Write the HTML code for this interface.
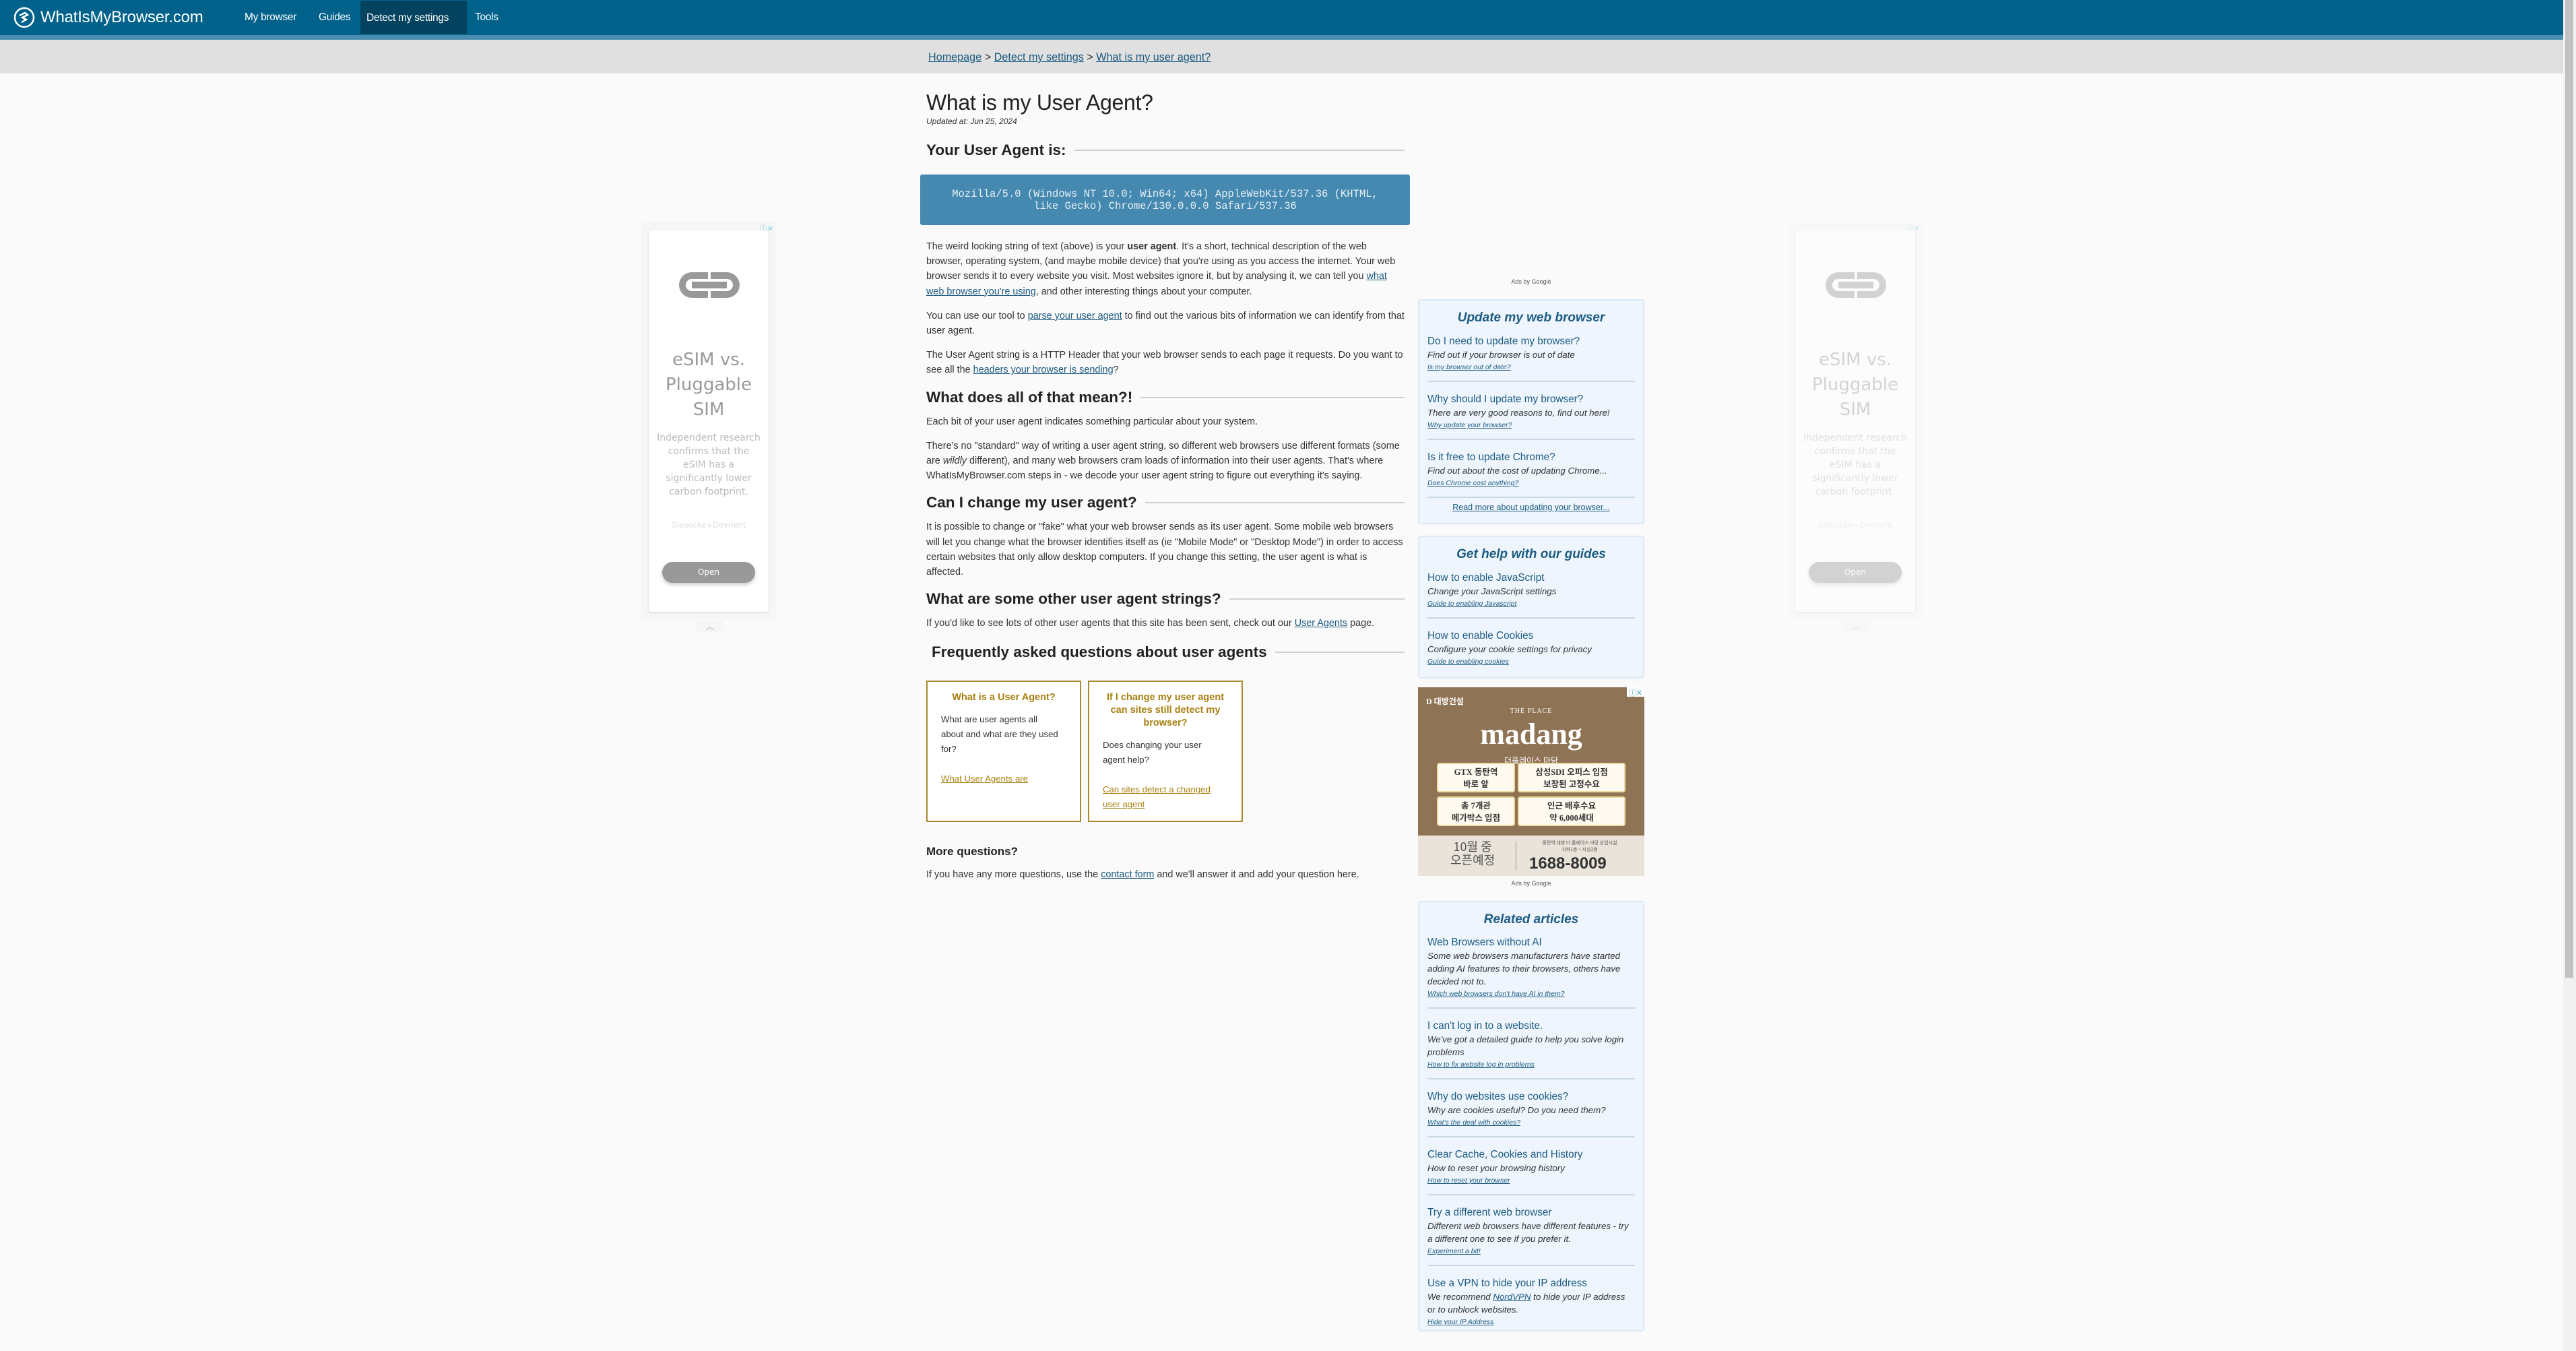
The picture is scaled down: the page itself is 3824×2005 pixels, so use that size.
<!DOCTYPE html>
<html><head><meta charset="utf-8">
<style>
*{box-sizing:border-box;margin:0;padding:0}
html,body{width:3824px;height:2005px;overflow:hidden;background:#fafafa;font-family:"Liberation Sans","Noto Sans CJK KR",sans-serif;color:#333}
a{color:#1b5a80;text-decoration:underline}
.abs{position:absolute}
#nav{left:0;top:0;width:3805px;height:52px;background:#00628b}
#stripe{left:0;top:52px;width:3805px;height:7px;background:#4a8db0}
#crumb{left:0;top:59px;width:3805px;height:50px;background:#e0e0e0}
.navi{position:absolute;top:0;height:50px;line-height:52px;color:#fff;font-size:15.5px;letter-spacing:-0.3px}
#main{left:1375px;top:132px;width:710px;font-size:14.4px;line-height:22.2px}
#main p{margin:0 0 14px 0}
h1{font-size:32px;font-weight:normal;color:#222;line-height:40px;letter-spacing:-0.3px}
.upd{font-size:12px;font-style:italic;line-height:16px;color:#333}
h2{display:flex;align-items:center;font-size:22.5px;font-weight:bold;color:#222;line-height:30px;margin:13px 0 10px}
h2:after{content:"";flex:1;height:2px;background:#d0d0d0;margin-left:12px}
#ua{left:1366px;top:259px;width:727px;height:75px;background:#4589b0;border-radius:3px;color:#e8f0f6;font-family:"Liberation Mono",monospace;font-size:15.5px;line-height:18px;text-align:center;padding-top:20px}
.card{position:absolute;top:1010px;width:230px;height:210px;border:2px solid #a88a30;background:#fff;padding:8px 30px 8px 20px;font-size:13.2px;line-height:22px}
.card h4{color:#a87f10;font-size:14.5px;text-align:center;line-height:19px;margin:6px -10px 12px 0}
.card a{color:#a87f10}
.box{position:absolute;left:2105px;width:336px;background:#eef5fc;border:2px solid #dde9f4;border-radius:4px;padding:0 12px}
.box h3{text-align:center;font-style:italic;font-weight:bold;color:#1c5b82;font-size:19px;line-height:24px;margin:14px 0 9px}
.it{border-bottom:2px solid #c8d8e4;padding:4px 0 10px;margin-bottom:12px}
.it .t{color:#1c5b82;font-size:15.3px;line-height:20px}
.it .d{font-style:italic;font-size:13.3px;line-height:19px;color:#333}
.it .l{font-style:italic;font-size:10.5px;line-height:19px}
.it:last-child{border-bottom:none}
.adw{position:absolute;top:329px;width:200px;height:590px;background:#f6f6f6}
.adc{position:absolute;left:11px;top:13px;width:178px;height:566px;background:#fff;border-radius:4px;box-shadow:0 1px 3px rgba(0,0,0,.15);text-align:center;font-family:"DejaVu Sans",sans-serif}
.adc .ti{position:absolute;top:174px;width:100%;font-size:26px;line-height:37px;color:#9a9a9a}
.adc .bd{position:absolute;top:298px;left:10px;width:158px;font-size:14px;line-height:20px;color:#bbb}
.adc .br{position:absolute;top:430px;width:100%;font-size:11.5px;color:#ddd}
.adc .op{position:absolute;top:492px;left:20px;width:138px;height:31px;border-radius:16px;background:#999;color:#fff;font-size:12px;line-height:31px;box-shadow:0 3px 6px rgba(0,0,0,.2)}
.tab{position:absolute;left:82px;top:592px;width:40px;height:18px;background:#f6f6f6;border-radius:0 0 6px 6px;color:#aaa;font-size:12px;text-align:center;line-height:18px}
.kbox{position:absolute;width:118px;height:44px;background:#fffaf0;border:2px solid #f1d9a0;border-radius:4px;text-align:center;font-size:12.5px;line-height:18px;font-weight:bold;color:#333;padding-top:3px}
</style></head><body>
<div class="abs" id="nav">
  <svg class="abs" style="left:20px;top:10px" width="32" height="32" viewBox="0 0 32 32"><circle cx="16" cy="16" r="14" fill="none" stroke="#fff" stroke-width="2.5"/><path d="M9 13l8-4 4 3-8 4 6 3-7 4" fill="none" stroke="#fff" stroke-width="2.5"/></svg>
  <div class="navi" style="left:60px;font-size:24px;letter-spacing:-0.2px">WhatIsMyBrowser.com</div>
  <div class="navi" style="left:363px">My browser</div>
  <div class="navi" style="left:473px">Guides</div>
  <div class="navi" style="left:535px;width:158px;background:#034360;top:1px;height:49px;padding-left:9px">Detect my settings</div>
  <div class="navi" style="left:705px">Tools</div>
</div>
<div class="abs" id="stripe"></div>
<div class="abs" id="crumb"><div class="abs" style="left:1378px;top:17px;font-size:16.2px;color:#333"><a href="#">Homepage</a> &gt; <a href="#">Detect my settings</a> &gt; <a href="#">What is my user agent?</a></div></div>
<div class="abs" style="left:3805px;top:0;width:19px;height:2005px;background:#f1f1f1"></div>
<div class="abs" style="left:3808px;top:0;width:12px;height:1451px;background:#c1c1c1"></div>

<div class="abs" id="main">
<h1>What is my User Agent?</h1>
<div class="upd">Updated at: Jun 25, 2024</div>
<h2 style="margin-top:20px">Your User Agent is:</h2>
<div style="height:107px"></div>
<p>The weird looking string of text (above) is your <b>user agent</b>. It's a short, technical description of the web browser, operating system, (and maybe mobile device) that you're using as you access the internet. Your web browser sends it to every website you visit. Most websites ignore it, but by analysing it, we can tell you <a href="#">what web browser you're using</a>, and other interesting things about your computer.</p>
<p>You can use our tool to <a href="#">parse your user agent</a> to find out the various bits of information we can identify from that user agent.</p>
<p>The User Agent string is a HTTP Header that your web browser sends to each page it requests. Do you want to see all the <a href="#">headers your browser is sending</a>?</p>
<h2>What does all of that mean?!</h2>
<p>Each bit of your user agent indicates something particular about your system.</p>
<p>There's no "standard" way of writing a user agent string, so different web browsers use different formats (some are <i>wildly</i> different), and many web browsers cram loads of information into their user agents. That's where WhatIsMyBrowser.com steps in - we decode your user agent string to figure out everything it's saying.</p>
<h2>Can I change my user agent?</h2>
<p>It is possible to change or "fake" what your web browser sends as its user agent. Some mobile web browsers will let you change what the browser identifies itself as (ie "Mobile Mode" or "Desktop Mode") in order to access certain websites that only allow desktop computers. If you change this setting, the user agent is what is affected.</p>
<h2>What are some other user agent strings?</h2>
<p>If you'd like to see lots of other user agents that this site has been sent, check out our <a href="#">User Agents</a> page.</p>
<h2 style="padding-left:8px;margin-top:17px">Frequently asked questions about user agents</h2>
</div>
<div class="abs" id="ua">Mozilla/5.0 (Windows NT 10.0; Win64; x64) AppleWebKit/537.36 (KHTML,<br>like Gecko) Chrome/130.0.0.0 Safari/537.36</div>
<div class="card" style="left:1375px"><h4>What is a User Agent?</h4>What are user agents all about and what are they used for?<br><br><a href="#">What User Agents are</a></div>
<div class="card" style="left:1615px"><h4>If I change my user agent can sites still detect my browser?</h4>Does changing your user agent help?<br><br><a href="#">Can sites detect a changed user agent</a></div>
<div class="abs" style="left:1375px;top:1254px;font-size:17px;font-weight:bold;color:#222">More questions?</div>
<div class="abs" style="left:1375px;top:1290px;font-size:14.4px">If you have any more questions, use the <a href="#">contact form</a> and we'll answer it and add your question here.</div>

<div class="abs" style="left:2105px;width:336px;top:413px;text-align:center;font-size:9px;color:#555">Ads by Google</div>
<div class="box" style="top:444px;height:334px">
<h3>Update my web browser</h3>
<div class="it"><div class="t">Do I need to update my browser?</div><div class="d">Find out if your browser is out of date</div><div class="l"><a href="#">Is my browser out of date?</a></div></div>
<div class="it"><div class="t">Why should I update my browser?</div><div class="d">There are very good reasons to, find out here!</div><div class="l"><a href="#">Why update your browser?</a></div></div>
<div class="it"><div class="t">Is it free to update Chrome?</div><div class="d">Find out about the cost of updating Chrome...</div><div class="l"><a href="#">Does Chrome cost anything?</a></div></div>
<div style="text-align:center;font-size:12.5px;margin-top:-5px"><a href="#">Read more about updating your browser...</a></div>
</div>
<div class="box" style="top:795px;height:212px">
<h3>Get help with our guides</h3>
<div class="it"><div class="t">How to enable JavaScript</div><div class="d">Change your JavaScript settings</div><div class="l"><a href="#">Guide to enabling Javascript</a></div></div>
<div class="it"><div class="t">How to enable Cookies</div><div class="d">Configure your cookie settings for privacy</div><div class="l"><a href="#">Guide to enabling cookies</a></div></div>
</div>
<div class="abs" style="left:2105px;top:1020px;width:336px;height:280px;background:#8f7355;overflow:hidden;font-family:'Liberation Serif','Noto Sans CJK KR',serif">
  <div class="abs" style="left:12px;top:12px;color:#fff;font-size:12px;font-weight:bold">D 대방건설</div>
  <div class="abs" style="right:0;top:0;width:26px;height:14px;background:#fff;color:#4ab;font-size:11px;text-align:center">ⓘ✕</div>
  <div class="abs" style="left:0;width:336px;top:30px;text-align:center;color:#fff;font-size:10px;letter-spacing:1px">THE PLACE</div>
  <div class="abs" style="left:0;width:336px;top:44px;text-align:center;color:#fff;font-size:44px;font-weight:bold">madang</div>
  <div class="abs" style="left:0;width:336px;top:100px;text-align:center;color:#fff;font-size:12px">더플레이스 마당</div>
  <div class="kbox" style="left:28px;top:112px;width:116px">GTX 동탄역<br>바로 앞</div>
  <div class="kbox" style="left:148px;top:112px;width:160px">삼성SDI 오피스 입점<br>보장된 고정수요</div>
  <div class="kbox" style="left:28px;top:162px;width:116px">총 7개관<br>메가박스 입점</div>
  <div class="kbox" style="left:148px;top:162px;width:160px">인근 배후수요<br>약 6,000세대</div>
  <div class="abs" style="left:0;top:220px;width:336px;height:60px;background:#e9e3da"></div>
  <div class="abs" style="left:48px;top:226px;font-size:18px;line-height:20px;color:#555;text-align:center;font-family:'Noto Sans CJK KR',sans-serif">10월 중<br>오픈예정</div>
  <div class="abs" style="left:145px;top:228px;width:1px;height:44px;background:#999"></div>
  <div class="abs" style="left:160px;top:226px;font-size:7px;color:#555;width:160px;text-align:center;font-family:'Noto Sans CJK KR',sans-serif">동탄역 대방 더 플레이스 마당 상업시설<br>지하1층 ~ 지상2층</div>
  <div class="abs" style="left:165px;top:248px;font-size:24px;font-weight:bold;color:#333;font-family:'Liberation Sans',sans-serif">1688-8009</div>
</div>
<div class="abs" style="left:2105px;width:336px;top:1306px;text-align:center;font-size:9px;color:#555">Ads by Google</div>
<div class="box" style="top:1337px;height:639px">
<h3 style="margin-bottom:8px">Related articles</h3>
<div class="it"><div class="t">Web Browsers without AI</div><div class="d">Some web browsers manufacturers have started adding AI features to their browsers, others have decided not to.</div><div class="l"><a href="#">Which web browsers don't have AI in them?</a></div></div>
<div class="it"><div class="t">I can't log in to a website.</div><div class="d">We've got a detailed guide to help you solve login problems</div><div class="l"><a href="#">How to fix website log in problems</a></div></div>
<div class="it"><div class="t">Why do websites use cookies?</div><div class="d">Why are cookies useful? Do you need them?</div><div class="l"><a href="#">What's the deal with cookies?</a></div></div>
<div class="it"><div class="t">Clear Cache, Cookies and History</div><div class="d">How to reset your browsing history</div><div class="l"><a href="#">How to reset your browser</a></div></div>
<div class="it"><div class="t">Try a different web browser</div><div class="d">Different web browsers have different features - try a different one to see if you prefer it.</div><div class="l"><a href="#">Experiment a bit!</a></div></div>
<div class="it"><div class="t">Use a VPN to hide your IP address</div><div class="d">We recommend <a href="#">NordVPN</a> to hide your IP address or to unblock websites.</div><div class="l"><a href="#">Hide your IP Address</a></div></div>
</div>

<div class="adw" style="left:952px">
 <div class="abs" style="right:4px;top:2px;color:#7cd;font-size:11px">ⓘ✕</div>
 <div class="adc">
  <svg class="abs" style="left:36px;top:58px" width="108" height="46" viewBox="0 0 108 46"><path d="M28 4H52V14H28A9 9 0 0 0 28 32H52V42H28A19 19 0 0 1 28 4Z M80 4H56V14H80A9 9 0 0 1 80 32H56V42H80A19 19 0 0 0 80 4Z M28 18H80V28H28Z" fill="#999"/></svg>
  <div class="ti">eSIM vs.<br>Pluggable<br>SIM</div>
  <div class="bd">Independent research confirms that the eSIM has a significantly lower carbon footprint.</div>
  <div class="br">Giesecke+Devrient</div>
  <div class="op">Open</div>
 </div>
 <div class="tab">︿</div>
</div>
<div class="adw" style="left:2654px;opacity:0.4">
 <div class="abs" style="right:4px;top:2px;color:#7cd;font-size:11px">ⓘ✕</div>
 <div class="adc">
  <svg class="abs" style="left:36px;top:58px" width="108" height="46" viewBox="0 0 108 46"><path d="M28 4H52V14H28A9 9 0 0 0 28 32H52V42H28A19 19 0 0 1 28 4Z M80 4H56V14H80A9 9 0 0 1 80 32H56V42H80A19 19 0 0 0 80 4Z M28 18H80V28H28Z" fill="#999"/></svg>
  <div class="ti">eSIM vs.<br>Pluggable<br>SIM</div>
  <div class="bd">Independent research confirms that the eSIM has a significantly lower carbon footprint.</div>
  <div class="br">Giesecke+Devrient</div>
  <div class="op">Open</div>
 </div>
 <div class="tab">︿</div>
</div>
</body></html>
